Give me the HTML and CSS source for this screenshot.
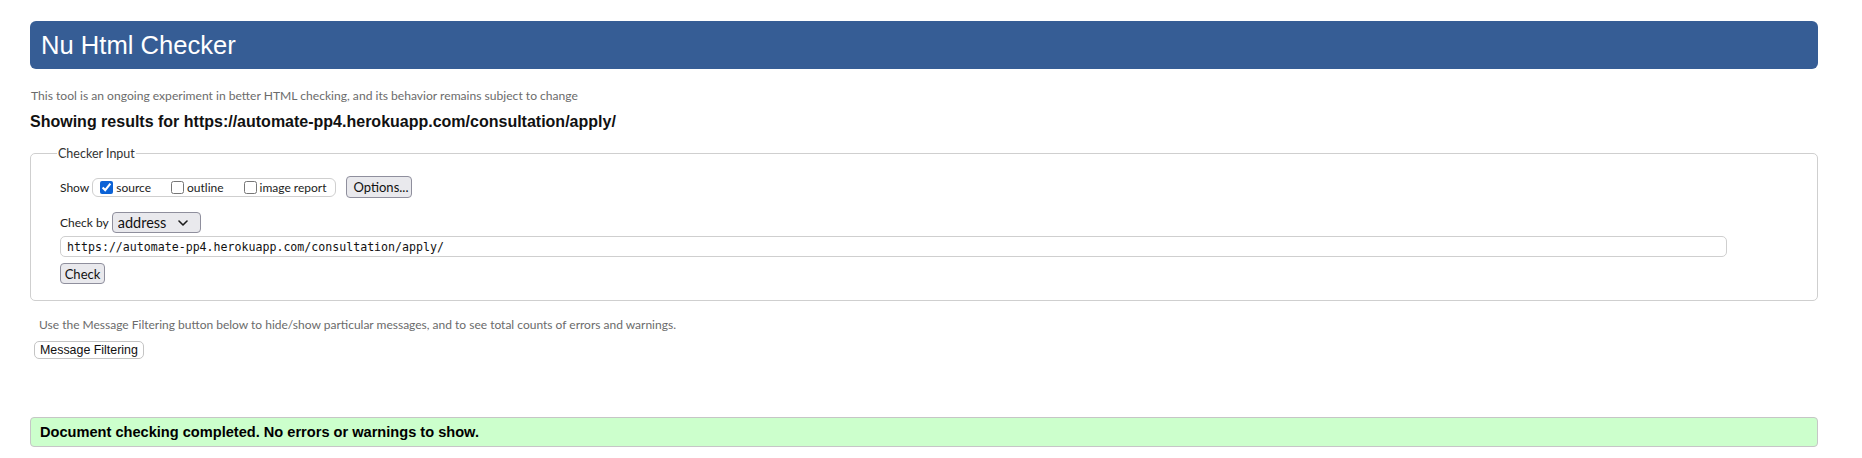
FILE: index.html
```html
<!DOCTYPE html>
<html lang="en">
<head>
<meta charset="utf-8">
<title>Showing results for https://automate-pp4.herokuapp.com/consultation/apply/ - Nu Html Checker</title>
<link rel="stylesheet" href="styles.css">
</head>
<body>
<h1 class="title">Nu Html Checker</h1>
<p class="intro">This tool is an ongoing experiment in better HTML checking, and its behavior remains subject to change</p>
<p class="results-for">Showing results for https://automate-pp4.herokuapp.com/consultation/apply/</p>
<fieldset class="checker">
  <legend class="checker-legend">Checker Input</legend>
  <div class="show-row">
    <span class="row-label">Show</span>
    <span class="show-group">
      <label class="opt"><input type="checkbox" class="cb" checked>source</label>
      <label class="opt"><input type="checkbox" class="cb">outline</label>
      <label class="opt"><input type="checkbox" class="cb">image report</label>
    </span>
    <button class="btn btn-options" type="button">Options...</button>
  </div>
  <div class="checkby-row">
    <span class="row-label">Check by</span>
    <span class="select-wrap">
      <select class="select"><option>address</option></select>
      <svg class="chevron" width="10" height="6" viewBox="0 0 10 6"><path d="M1 1 L5 5 L9 1" fill="none" stroke="#1b1b1b" stroke-width="1.6" stroke-linecap="round" stroke-linejoin="round"/></svg>
    </span>
  </div>
  <input class="url" type="url" value="https://automate-pp4.herokuapp.com/consultation/apply/">
  <div class="submit-row"><button class="btn btn-check" type="submit">Check</button></div>
</fieldset>
<p class="note">Use the Message Filtering button below to hide/show particular messages, and to see total counts of errors and warnings.</p>
<button class="filter-btn" type="button">Message Filtering</button>
<div class="success">Document checking completed. No errors or warnings to show.</div>
</body>
</html>
```
FILE: styles.css
```css
html {
  background: #fff;
}
body {
  margin: 0;
  padding: 21px 44px 10px 30px;
  color: #000;
  font-family: "Liberation Sans", Arial, sans-serif;
}
.title {
  margin: 0;
  height: 48px;
  line-height: 48px;
  padding: 0 11px;
  background: #365d95;
  color: #fff;
  font-size: 25.6px;
  font-weight: normal;
  border-radius: 6px;
}
.intro {
  margin: 19px 0 0 1px;
  font-family: Lato, "Open Sans", sans-serif;
  font-size: 12.1px;
  line-height: 16px;
  color: #6b6b6b;
}
.results-for {
  margin: 8px 0 0;
  font-size: 16px;
  font-weight: bold;
  line-height: 20px;
  color: #111;
}
.checker {
  margin: 14px 0 0;
  padding: 0 10px 16px 29px;
  border: 1px solid #cfcfcf;
  border-radius: 5px;
  font-family: Lato, "Open Sans", sans-serif;
  font-size: 12px;
  color: #222;
}
.checker-legend {
  margin-left: -3px;
  padding: 0 1px;
  line-height: 15px;
  font-size: 12.5px;
  color: #333;
}
.show-row {
  margin-top: 15px;
  display: flex;
  align-items: center;
  height: 22px;
}
.row-label {
  margin-right: 3px;
}
.show-group {
  display: inline-flex;
  align-items: center;
  height: 17px;
  padding: 0 8px 0 3px;
  border: 1px solid #cfcfcf;
  border-radius: 6px;
}
.opt {
  display: inline-flex;
  align-items: center;
}
.opt + .opt {
  margin-left: 16px;
}
.cb {
  width: 13px;
  height: 13px;
  margin: 0 3px 0 4px;
  accent-color: #0b62d6;
}
.btn {
  font-family: Lato, "Open Sans", sans-serif;
  font-size: 13px;
  color: #111;
  background: #e9e9ed;
  border: 1px solid #8f8f9d;
  border-radius: 4px;
  padding: 0 7px;
}
.btn-options {
  margin-left: 10px;
  height: 22px;
  width: 66px;
}
.checkby-row {
  margin-top: 14px;
  display: flex;
  align-items: center;
  height: 21px;
}
.select-wrap {
  position: relative;
  display: inline-block;
  height: 21px;
}
.select {
  appearance: none;
  -webkit-appearance: none;
  width: 89px;
  height: 21px;
  padding: 0 0 0 5px;
  margin: 0;
  font-family: Lato, "Open Sans", sans-serif;
  font-size: 14.5px;
  color: #111;
  background: #e9e9ed;
  border: 1px solid #8f8f9d;
  border-radius: 4px;
}
.chevron {
  position: absolute;
  right: 13px;
  top: 8px;
  pointer-events: none;
}
.url {
  display: block;
  margin: 3px 0 0;
  width: calc(100% - 80px);
  height: 21px;
  box-sizing: border-box;
  padding: 0 6px;
  font-family: "DejaVu Sans Mono", "Liberation Mono", monospace;
  font-size: 11.6px;
  color: #111;
  background: #fff;
  border: 1px solid #cfcfcf;
  border-radius: 5px;
}
.submit-row {
  margin-top: 6px;
  display: flex;
}
.btn-check {
  height: 21px;
  width: 45px;
  padding: 0;
}
.note {
  margin: 16px 0 0 9px;
  font-family: Lato, "Open Sans", sans-serif;
  font-size: 12px;
  line-height: 16px;
  color: #6b6b6b;
}
.filter-btn {
  display: block;
  margin: 8px 0 0 4px;
  height: 18px;
  padding: 0 5px;
  font-family: "Liberation Sans", Arial, sans-serif;
  font-size: 12.4px;
  color: #111;
  background: #fff;
  border: 1px solid #c4c4c4;
  border-radius: 5px;
}
.success {
  margin-top: 58px;
  height: 30px;
  box-sizing: border-box;
  display: flex;
  align-items: center;
  padding: 0 9px;
  background: #ccffcc;
  border: 1px solid #c6c6c6;
  border-radius: 4px;
  font-size: 14.6px;
  font-weight: bold;
  color: #000;
}
```
